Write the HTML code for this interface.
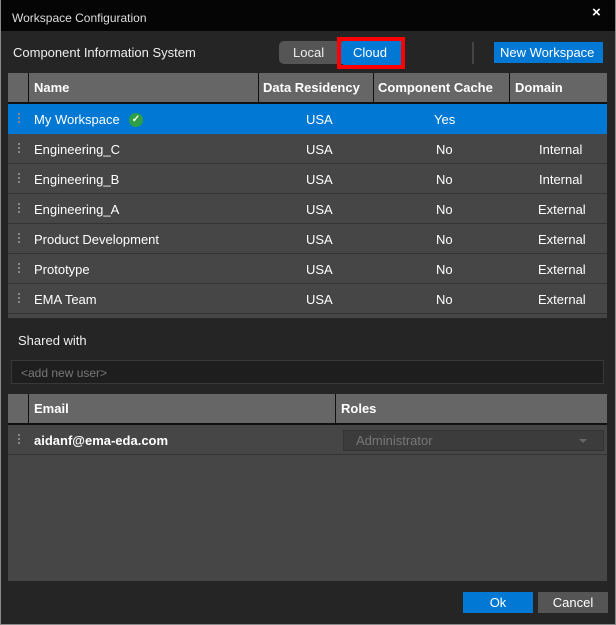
<!DOCTYPE html>
<html><head><style>
*{margin:0;padding:0;box-sizing:border-box}
body{width:616px;height:625px;background:#252525;font-family:"Liberation Sans",sans-serif;font-size:13px;color:#fff;position:relative;overflow:hidden}
.frame{position:absolute;left:0;top:0;width:616px;height:625px;border:1px solid #8a8a8a;border-top:none}
.title{position:absolute;left:1px;top:0;width:614px;height:31px;background:#050505}
.abs{position:absolute;white-space:nowrap}
.tbl{position:absolute;left:8px;width:599px;background:#464646}
.hdr{position:absolute;left:0;top:0;width:599px;height:31px;background:#666;border-bottom:2px solid #111}
.hdr div{position:absolute;top:0;height:29px;line-height:30px;font-weight:bold;padding-left:5px;border-left:1px solid #111}
.row{position:absolute;left:0;width:599px;height:30px;border-bottom:1px solid #333;line-height:31px}
.row span{position:absolute}
.grip{position:absolute;left:10px;top:9px;width:2px;height:10px;background:repeating-linear-gradient(#888 0 2px,transparent 2px 4px)}
</style></head><body>
<div class="title"></div>
<div class="abs" style="left:12px;top:11px;font-size:12px;color:#ddd">Workspace Configuration</div>
<div class="abs" style="left:592px;top:4px;font-size:15px;font-weight:bold">×</div>
<div class="abs" style="left:13px;top:45px;color:#eee">Component Information System</div>
<div class="abs" style="left:279px;top:41px;width:126px;height:23px;background:#555;border-radius:5px"></div>
<div class="abs" style="left:293px;top:45px;color:#eee">Local</div>
<div class="abs" style="left:337px;top:37px;width:68px;height:32px;border:4px solid #f00"></div>
<div class="abs" style="left:341px;top:41px;width:60px;height:24px;background:#0078d4;border-radius:4px 0 0 4px"></div>
<div class="abs" style="left:353px;top:45px">Cloud</div>
<div class="abs" style="left:472px;top:42px;width:2px;height:22px;background:#444"></div>
<div class="abs" style="left:494px;top:42px;width:109px;height:21px;background:#0078d4"></div>
<div class="abs" style="left:500px;top:45px">New Workspace</div>

<div class="tbl" style="top:73px;height:245px">
 <div class="hdr"><div style="left:20px;width:230px">Name</div><div style="left:250px;width:115px;padding-left:4px">Data Residency</div><div style="left:365px;width:136px;padding-left:4px">Component Cache</div><div style="left:501px;width:98px">Domain</div></div>
 <div class="row" style="top:31px;background:#0078d4;border-bottom-color:#0078d4"><div class="grip"></div><span style="left:26px">My Workspace</span><span style="left:121px;top:9px;width:14px;height:14px;border-radius:7px;background:#2ea043;line-height:14px;text-align:center;font-size:10px;font-weight:bold">✓</span><span style="left:298px">USA</span><span style="left:426px">Yes</span></div>
 <div class="row" style="top:61px"><div class="grip"></div><span style="left:26px">Engineering_C</span><span style="left:298px">USA</span><span style="left:428px">No</span><span style="left:531px">Internal</span></div>
 <div class="row" style="top:91px"><div class="grip"></div><span style="left:26px">Engineering_B</span><span style="left:298px">USA</span><span style="left:428px">No</span><span style="left:531px">Internal</span></div>
 <div class="row" style="top:121px"><div class="grip"></div><span style="left:26px">Engineering_A</span><span style="left:298px">USA</span><span style="left:428px">No</span><span style="left:530px">External</span></div>
 <div class="row" style="top:151px"><div class="grip"></div><span style="left:26px">Product Development</span><span style="left:298px">USA</span><span style="left:428px">No</span><span style="left:530px">External</span></div>
 <div class="row" style="top:181px"><div class="grip"></div><span style="left:26px">Prototype</span><span style="left:298px">USA</span><span style="left:428px">No</span><span style="left:530px">External</span></div>
 <div class="row" style="top:211px"><div class="grip"></div><span style="left:26px">EMA Team</span><span style="left:298px">USA</span><span style="left:428px">No</span><span style="left:530px">External</span></div>
</div>

<div class="abs" style="left:18px;top:333px;color:#eee">Shared with</div>
<div class="abs" style="left:11px;top:360px;width:593px;height:24px;background:#1e1e1e;border:1px solid #383838"></div>
<div class="abs" style="left:21px;top:366px;color:#777;font-size:12px">&lt;add new user&gt;</div>

<div class="tbl" style="top:394px;height:187px">
 <div class="hdr"><div style="left:20px;width:307px">Email</div><div style="left:327px;width:272px">Roles</div></div>
 <div class="row" style="top:31px"><div class="grip"></div><span style="left:26px;font-weight:bold">aidanf@ema-eda.com</span>
 <span style="left:335px;top:5px;width:261px;height:21px;background:#3c3c3c;border:1px solid #333"></span>
 <span style="left:348px;color:#777">Administrator</span>
 <span style="left:571px;top:14px;width:0;height:0;border-left:4px solid transparent;border-right:4px solid transparent;border-top:4px solid #666"></span></div>
</div>

<div class="abs" style="left:463px;top:592px;width:70px;height:21px;background:#0078d4;text-align:center;line-height:21px">Ok</div>
<div class="abs" style="left:538px;top:592px;width:70px;height:21px;background:#555;text-align:center;line-height:21px">Cancel</div>
<div class="frame"></div>
</body></html>
